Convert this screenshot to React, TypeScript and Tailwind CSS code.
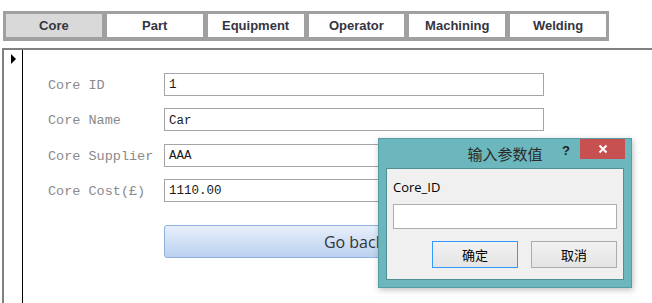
import React, { FC } from "react";

const tabs = ["Core", "Part", "Equipment", "Operator", "Machining", "Welding"];

const fields = [
  { label: "Core ID", value: "1" },
  { label: "Core Name", value: "Car" },
  { label: "Core Supplier", value: "AAA" },
  { label: "Core Cost(£)", value: "1110.00" },
];

const mono = { fontFamily: '"Liberation Mono", "DejaVu Sans Mono", monospace' };

const TabBar: FC = () => (
  <div className="pl-[3px] pt-[11px]">
    <div className="grid w-[606px] grid-cols-6 gap-[5px] bg-[#a0a0a0] px-[3px] pt-[3px] pb-[4px]">
      {tabs.map((t, i) => (
        <div
          key={t}
          className={`flex h-[23px] items-center justify-center text-[13px] font-bold text-[#35353f] ${
            i === 0 ? "bg-[#d9d9d9]" : "bg-white"
          }`}
          style={{ fontFamily: '"Liberation Sans", Arial, sans-serif' }}
        >
          {t}
        </div>
      ))}
    </div>
  </div>
);

const ParamDialog: FC = () => (
  <div className="absolute left-[378px] top-[138px] h-[150px] w-[254px] border border-[#559ca3] bg-[#6bb7bd] shadow-[1px_2px_6px_rgba(0,0,0,0.25)]">
    <div className="relative h-[29px]">
      <div
        className="pt-[4px] text-center text-[15px] text-[#2a2a2a]"
        style={{ fontFamily: '"Noto Sans CJK SC", sans-serif' }}
      >
        输入参数值
      </div>
      <span
        className="absolute left-[183px] top-[2px] text-[13px] font-bold text-[#222]"
        style={{ fontFamily: '"Liberation Sans", Arial, sans-serif' }}
      >
        ?
      </span>
      <div className="absolute right-[6px] top-0 flex h-[20px] w-[45px] items-center justify-center bg-[#c75050]">
        <svg width="10" height="10" viewBox="0 0 10 10">
          <path d="M1.5 1.5 L8.5 8.5 M8.5 1.5 L1.5 8.5" stroke="#fff" strokeWidth="2" />
        </svg>
      </div>
    </div>
    <div className="mx-[7px] h-[112px] border border-[#4f8f96] bg-[#f0f0f0] px-[6px]">
      <div
        className="mt-[10px] text-[13px] leading-[16px] text-black"
        style={{ fontFamily: '"Open Sans", "Noto Sans", sans-serif' }}
      >
        Core_ID
      </div>
      <div className="mt-[9px] h-[25px] w-[224px] border border-[#acacb2] bg-white" />
      <div
        className="mt-[12px] flex justify-end gap-[13px] text-[13px] text-black"
        style={{ fontFamily: '"Noto Sans CJK SC", sans-serif' }}
      >
        <button className="flex h-[27px] w-[86px] items-center justify-center border border-[#3399ff] bg-gradient-to-b from-[#f2f2f2] to-[#e4e4e4]">
          确定
        </button>
        <button className="flex h-[27px] w-[86px] items-center justify-center border border-[#acacac] bg-gradient-to-b from-[#f2f2f2] to-[#e4e4e4]">
          取消
        </button>
      </div>
    </div>
  </div>
);

const App: FC = () => {
  return (
    <div className="relative h-[303px] w-[652px] overflow-hidden bg-white">
      <TabBar />
      <div className="ml-[2px] mt-[7px] flex h-[255px] border-l-2 border-t-2 border-[#808080]">
        <div className="w-[19px] border-r border-black pl-[7px] pt-[4px]">
          <svg width="6" height="10" viewBox="0 0 6 10">
            <path d="M0 0 L5 5 L0 10 Z" fill="#000" />
          </svg>
        </div>
        <div className="pl-[25px] pt-[23px]">
          <div className="flex flex-col gap-[12px]">
            {fields.map((f) => (
              <div key={f.label} className="flex items-center">
                <div className="w-[116px] pt-[3px] text-[13.5px] text-[#8a8a8a]" style={mono}>
                  {f.label}
                </div>
                <div
                  className="flex h-[23px] w-[380px] items-center border border-[#a5a5a5] px-[4px] pt-[2px] text-[12.5px] text-[#1a1a1a]"
                  style={mono}
                >
                  {f.value}
                </div>
              </div>
            ))}
          </div>
          <button
            className="ml-[116px] mt-[23px] flex h-[33px] w-[380px] items-center justify-center rounded-[3px] border border-[#8fb1de] bg-gradient-to-b from-[#e8effb] to-[#bad1ef] text-[16px] text-[#333]"
            style={{ fontFamily: '"Open Sans", "Noto Sans", sans-serif' }}
          >
            Go back
          </button>
        </div>
      </div>
      <ParamDialog />
    </div>
  );
};

export default App;
